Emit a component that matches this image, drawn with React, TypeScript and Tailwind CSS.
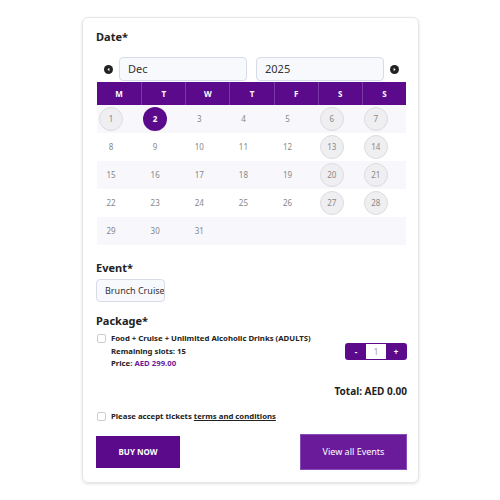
import React from 'react';

const days = ['M', 'T', 'W', 'T', 'F', 'S', 'S'];

// Dec 2025 starts on Monday
const weeks: (number | null)[][] = [
  [1, 2, 3, 4, 5, 6, 7],
  [8, 9, 10, 11, 12, 13, 14],
  [15, 16, 17, 18, 19, 20, 21],
  [22, 23, 24, 25, 26, 27, 28],
  [29, 30, 31, null, null, null, null],
];

const circled = new Set([1, 6, 7, 13, 14, 20, 21, 27, 28]);

const Arrow: React.FC<{ dir: 'left' | 'right' }> = ({ dir }) => (
  <svg width="9" height="9" viewBox="0 0 10 10">
    <circle cx="5" cy="5" r="5" fill="#222" />
    {dir === 'left' ? (
      <path d="M6 3 L3.8 5 L6 7 Z" fill="#fff" />
    ) : (
      <path d="M4 3 L6.2 5 L4 7 Z" fill="#fff" />
    )}
  </svg>
);

const App: React.FC = () => {
  return (
    <div className="w-[500px] h-[500px] bg-white pt-[17px] pl-[82px]" style={{ fontFamily: '"Noto Sans", sans-serif' }}>
      <div className="w-[337px] h-[466px] border border-[#e6e6e6] rounded-md shadow-[0_1px_3px_rgba(0,0,0,0.12)] px-[13px] pt-[12px]">
        <div className="text-[11px] font-bold text-[#222] leading-[14px]">Date*</div>

        <div className="flex items-center mt-[13px] h-[24px]">
          <div className="w-[23px] flex justify-center pl-[1px]">
            <Arrow dir="left" />
          </div>
          <div className="w-[128px] h-[24px] border border-[#d8dcea] rounded-[4px] bg-[#f8f9fd] flex items-center pl-[8px] text-[11px] text-[#333]">Dec</div>
          <div className="w-[9px]" />
          <div className="w-[128px] h-[24px] border border-[#d8dcea] rounded-[4px] bg-[#f8f9fd] flex items-center pl-[8px] text-[11px] text-[#333]">2025</div>
          <div className="flex-1 flex justify-center">
            <Arrow dir="right" />
          </div>
        </div>

        <div className="w-[309px] mt-[1px] ml-[1px]">
          <div className="grid grid-cols-7 bg-[#5a0a8b] h-[23px]">
            {days.map((d, i) => (
              <div
                key={i}
                className={`flex items-center justify-center text-white text-[8px] font-bold ${i > 0 ? 'border-l border-[#7a3aa6]' : ''}`}
              >
                {d}
              </div>
            ))}
          </div>
          {weeks.map((w, wi) => (
            <div key={wi} className={`grid grid-cols-7 h-[28px] ${wi % 2 === 0 ? 'bg-[#f7f7fc]' : 'bg-white'}`}>
              {w.map((n, di) => (
                <div key={di} className="flex items-center pl-[2px]">
                  {n !== null && (
                    <div
                      className={`w-[24px] h-[24px] rounded-full flex items-center justify-center text-[8px] ${
                        n === 2
                          ? 'bg-[#5a0a8b] text-white font-bold'
                          : circled.has(n)
                          ? 'bg-[#efeff1] border border-[#dcdcdf] text-[#888]'
                          : 'text-[#888]'
                      }`}
                    >
                      {n}
                    </div>
                  )}
                </div>
              ))}
            </div>
          ))}
        </div>

        <div className="text-[11px] font-bold text-[#222] mt-[16px] leading-[14px]">Event*</div>
        <div className="mt-[4px] w-[69px] h-[23px] border border-[#d8dcea] rounded-[4px] bg-[#f8f9fd] flex items-center pl-[8px] text-[9px] text-[#333] whitespace-nowrap overflow-hidden">
          Brunch Cruise
        </div>

        <div className="text-[11px] font-bold text-[#222] mt-[12px] leading-[14px]">Package*</div>
        <div className="flex mt-[4px] -mr-[2px]">
          <div className="w-[9px] h-[9px] border border-[#ccc] rounded-[2px] mt-[2px] ml-[1px]" />
          <div className="ml-[5px] text-[7.75px] font-bold text-[#222] leading-[12.5px]">
            <div>Food + Cruise + Unlimited Alcoholic Drinks (ADULTS)</div>
            <div>Remaining slots: 15</div>
            <div>
              Price: <span className="text-[#6a1b9a]">AED 299.00</span>
            </div>
          </div>
          <div className="flex-1 flex justify-end items-start pt-[11px]">
            <div className="flex h-[17px] w-[62px] bg-[#5a0a8b] rounded-[3px] p-[1px]">
              <div className="flex-1 flex items-center justify-center text-white text-[8px] font-bold">-</div>
              <div className="w-[20px] bg-white flex items-center justify-center text-[8px] text-[#999]">1</div>
              <div className="flex-1 flex items-center justify-center text-white text-[8px] font-bold">+</div>
            </div>
          </div>
        </div>

        <div className="text-right text-[10px] font-bold text-[#222] mt-[14px] -mr-[2px]">Total: AED 0.00</div>

        <div className="flex items-center mt-[12px]">
          <div className="w-[9px] h-[9px] border border-[#ccc] rounded-[2px] ml-[1px]" />
          <div className="ml-[5px] text-[7.75px] font-bold text-[#222]">
            Please accept tickets <span className="underline">terms and conditions</span>
          </div>
        </div>

        <div className="flex justify-between items-center mt-[12px] -mr-[2px]">
          <button className="w-[84px] h-[32px] bg-[#5a0a8b] text-white text-[8px] font-bold">BUY NOW</button>
          <button className="w-[107px] h-[36px] bg-[#6a1b9a] border border-[#8a4ab8] text-white text-[9px]">View all Events</button>
        </div>
      </div>
    </div>
  );
};

export default App;
